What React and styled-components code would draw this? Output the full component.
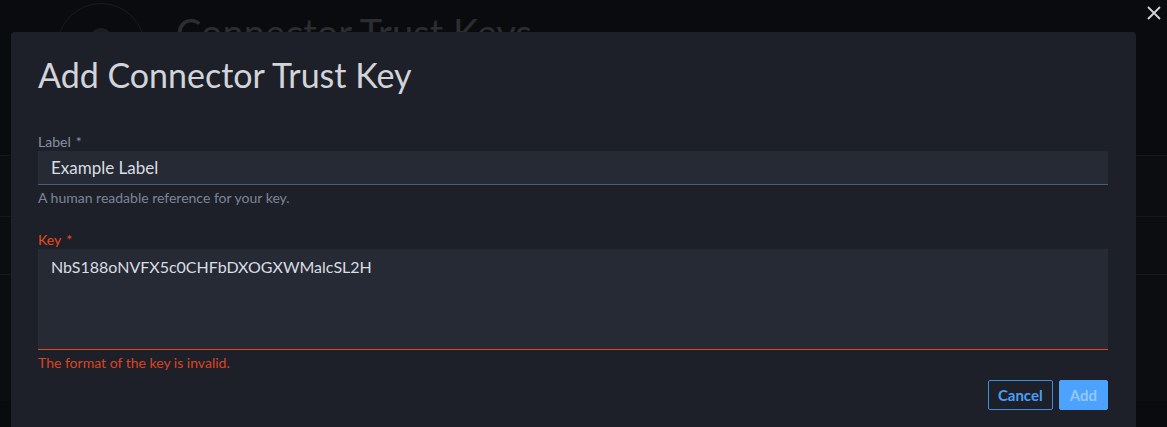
import React from "react";
import styled, { createGlobalStyle } from "styled-components";

const GlobalStyle = createGlobalStyle`
  body {
    margin: 0;
    background: #0a0b0e;
    font-family: Lato, "Noto Sans", sans-serif;
  }
`;

const Page = styled.div`
  position: relative;
  height: 427px;
  overflow: hidden;
`;

const PageHeader = styled.div`
  display: flex;
  align-items: center;
  gap: 31px;
  padding: 3px 0 0 57px;
`;

const Avatar = styled.div`
  width: 88px;
  height: 88px;
  border-radius: 50%;
  border: 1px solid #191b21;
  display: flex;
  justify-content: center;
  padding-top: 24px;
  box-sizing: border-box;
`;

const AvatarHead = styled.div`
  width: 22px;
  height: 22px;
  border-radius: 50%;
  background: #1b1d23;
`;

const PageTitle = styled.h1`
  margin: 0 0 30px;
  font-size: 38px;
  font-weight: 400;
  color: #2b2d31;
`;

const List = styled.div`
  margin-top: 64px;
  background: #0c0d10;
`;

const ListRow = styled.div`
  height: ${({ h }) => h}px;
  border-top: 1px solid #16181c;
`;

const CloseButton = styled.button`
  position: absolute;
  top: 5px;
  right: 5px;
  width: 16px;
  height: 16px;
  padding: 0;
  border: none;
  background: none;
  color: #d4d4d4;
  cursor: pointer;
`;

const Modal = styled.div`
  position: absolute;
  left: 11px;
  top: 32px;
  width: 1125px;
  height: 420px;
  box-sizing: border-box;
  padding: 23px 28px 0 27px;
  background: #1d2029;
  border-radius: 4px;
`;

const Title = styled.h2`
  margin: 0 0 39px;
  font-size: 34px;
  line-height: 40px;
  font-weight: 400;
  color: #d2d4d9;
`;

const Field = styled.div`
  display: flex;
  flex-direction: column;
  margin-bottom: ${({ gap }) => gap || 0}px;
`;

const FieldLabel = styled.label`
  font-size: 14px;
  line-height: 16px;
  color: ${({ error }) => (error ? "#ef4a1f" : "#8890a4")};
  margin-bottom: 1px;

  span {
    margin-left: 5px;
  }
`;

const Input = styled.div`
  height: 34px;
  box-sizing: border-box;
  padding: 0 13px;
  display: flex;
  align-items: center;
  background: #262a35;
  border-bottom: 1px solid #4f5a73;
  color: #dadde2;
  font-size: 17px;
`;

const TextArea = styled.div`
  height: 101px;
  box-sizing: border-box;
  padding: 8px 13px;
  background: #262a35;
  border-bottom: 1px solid #e0461f;
  color: #dadde2;
  font-size: 16px;
  line-height: 20px;
`;

const Hint = styled.div`
  margin-top: 5px;
  font-size: 14px;
  line-height: 16px;
  color: ${({ error }) => (error ? "#dd4320" : "#7d8597")};
`;

const Actions = styled.div`
  display: flex;
  justify-content: flex-end;
  gap: 6px;
  margin-top: 9px;
`;

const Button = styled.button`
  height: 30px;
  padding: 0 ${({ primary }) => (primary ? 10 : 9)}px;
  box-sizing: border-box;
  border-radius: 2px;
  font-family: Lato, "Noto Sans", sans-serif;
  font-size: 15px;
  font-weight: 700;
  cursor: pointer;
  border: 1px solid ${({ primary }) => (primary ? "#4ca2fc" : "#3d8ee0")};
  background: ${({ primary }) => (primary ? "#4ca2fc" : "transparent")};
  color: ${({ primary }) => (primary ? "#93c9ff" : "#4a9ff3")};
`;

export default function App() {
  return (
    <>
      <GlobalStyle />
      <Page>
        <PageHeader>
          <Avatar>
            <AvatarHead />
          </Avatar>
          <PageTitle>Connector Trust Keys</PageTitle>
        </PageHeader>
        <List>
          <ListRow h={60} />
          <ListRow h={57} />
          <ListRow h={126} />
        </List>
        <CloseButton aria-label="Close">
          <svg width="16" height="16" viewBox="0 0 16 16">
            <path d="M2 2 L14 14 M14 2 L2 14" stroke="currentColor" strokeWidth="1.8" />
          </svg>
        </CloseButton>
        <Modal>
          <Title>Add Connector Trust Key</Title>
          <Field gap={26}>
            <FieldLabel>
              Label<span>*</span>
            </FieldLabel>
            <Input>Example Label</Input>
            <Hint>A human readable reference for your key.</Hint>
          </Field>
          <Field>
            <FieldLabel error>
              Key<span>*</span>
            </FieldLabel>
            <TextArea>NbS188oNVFX5c0CHFbDXOGXWMalcSL2H</TextArea>
            <Hint error>The format of the key is invalid.</Hint>
          </Field>
          <Actions>
            <Button>Cancel</Button>
            <Button primary>Add</Button>
          </Actions>
        </Modal>
      </Page>
    </>
  );
}
